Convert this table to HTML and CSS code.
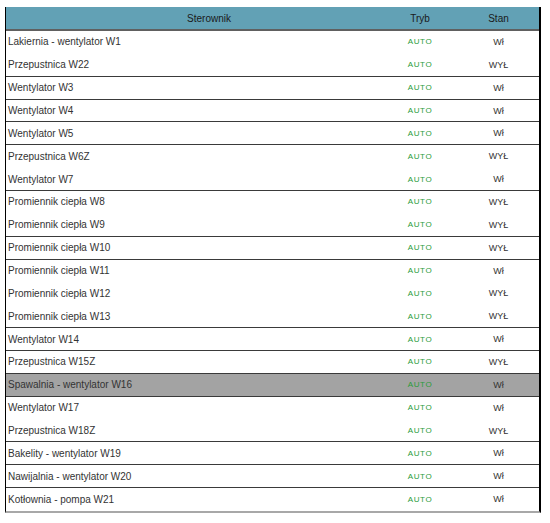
FILE: index.html
```html
<!DOCTYPE html>
<html>
<head>
<meta charset="utf-8">
<link rel="stylesheet" href="styles.css">
</head>
<body>
<div class="panel">
<table class="grid">
<thead>
<tr><th class="c-name">Sterownik</th><th class="c-mode">Tryb</th><th class="c-state">Stan</th></tr>
</thead>
<tbody>
<tr><td class="c-name">Lakiernia - wentylator W1</td><td class="c-mode">AUTO</td><td class="c-state">Wł</td></tr>
<tr class="sep"><td class="c-name">Przepustnica W22</td><td class="c-mode">AUTO</td><td class="c-state">WYŁ</td></tr>
<tr class="sep"><td class="c-name">Wentylator W3</td><td class="c-mode">AUTO</td><td class="c-state">Wł</td></tr>
<tr class="sep"><td class="c-name">Wentylator W4</td><td class="c-mode">AUTO</td><td class="c-state">Wł</td></tr>
<tr class="sep"><td class="c-name">Wentylator W5</td><td class="c-mode">AUTO</td><td class="c-state">Wł</td></tr>
<tr><td class="c-name">Przepustnica W6Z</td><td class="c-mode">AUTO</td><td class="c-state">WYŁ</td></tr>
<tr class="sep"><td class="c-name">Wentylator W7</td><td class="c-mode">AUTO</td><td class="c-state">Wł</td></tr>
<tr><td class="c-name">Promiennik ciepła W8</td><td class="c-mode">AUTO</td><td class="c-state">WYŁ</td></tr>
<tr class="sep"><td class="c-name">Promiennik ciepła W9</td><td class="c-mode">AUTO</td><td class="c-state">WYŁ</td></tr>
<tr class="sep"><td class="c-name">Promiennik ciepła W10</td><td class="c-mode">AUTO</td><td class="c-state">WYŁ</td></tr>
<tr><td class="c-name">Promiennik ciepła W11</td><td class="c-mode">AUTO</td><td class="c-state">Wł</td></tr>
<tr><td class="c-name">Promiennik ciepła W12</td><td class="c-mode">AUTO</td><td class="c-state">WYŁ</td></tr>
<tr class="sep"><td class="c-name">Promiennik ciepła W13</td><td class="c-mode">AUTO</td><td class="c-state">WYŁ</td></tr>
<tr class="sep"><td class="c-name">Wentylator W14</td><td class="c-mode">AUTO</td><td class="c-state">Wł</td></tr>
<tr class="sep"><td class="c-name">Przepustnica W15Z</td><td class="c-mode">AUTO</td><td class="c-state">WYŁ</td></tr>
<tr class="sep active"><td class="c-name">Spawalnia - wentylator W16</td><td class="c-mode">AUTO</td><td class="c-state">Wł</td></tr>
<tr><td class="c-name">Wentylator W17</td><td class="c-mode">AUTO</td><td class="c-state">Wł</td></tr>
<tr class="sep"><td class="c-name">Przepustnica W18Z</td><td class="c-mode">AUTO</td><td class="c-state">WYŁ</td></tr>
<tr class="sep"><td class="c-name">Bakelity - wentylator W19</td><td class="c-mode">AUTO</td><td class="c-state">Wł</td></tr>
<tr class="sep"><td class="c-name">Nawijalnia - wentylator W20</td><td class="c-mode">AUTO</td><td class="c-state">Wł</td></tr>
<tr class="last"><td class="c-name">Kotłownia - pompa W21</td><td class="c-mode">AUTO</td><td class="c-state">Wł</td></tr>
</tbody>
</table>
</div>
</body>
</html>
```
FILE: styles.css
```css
html, body {
  margin: 0;
  padding: 0;
  background: #ffffff;
}
body {
  padding: 7px 0 0 5px;
  font-family: "Liberation Sans", Arial, sans-serif;
  font-size: 10px;
  color: #333333;
}
.panel {
  width: 536px;
  border-left: 1px solid #000000;
  border-right: 2px solid #000000;
  border-bottom: 2px solid #a8a8a8;
  box-sizing: border-box;
}
.grid {
  width: 100%;
  border-collapse: collapse;
  table-layout: fixed;
}
.grid th {
  background: #62a1b5;
  color: #1a1a1a;
  font-weight: normal;
  height: 22px;
  padding: 0;
  border-bottom: 2px solid #606060;
}
.grid td {
  height: 21.86px;
  padding: 0;
  border-bottom: 1px solid transparent;
}
.grid tr.sep td {
  border-bottom: 1px solid #3a3a3a;
}
.grid tr.active td {
  background: #a3a3a3;
}
.c-name {
  width: 376px;
  text-align: left;
}
td.c-name {
  padding-left: 2px;
}
th.c-name {
  text-align: center;
  text-indent: 30px;
}
.c-mode {
  width: 76px;
  text-align: center;
}
td.c-mode {
  color: #2a9c3a;
  font-size: 8px;
  letter-spacing: 0.6px;
}
.c-state {
  text-align: center;
}
td.c-state {
  font-size: 9px;
}
```
